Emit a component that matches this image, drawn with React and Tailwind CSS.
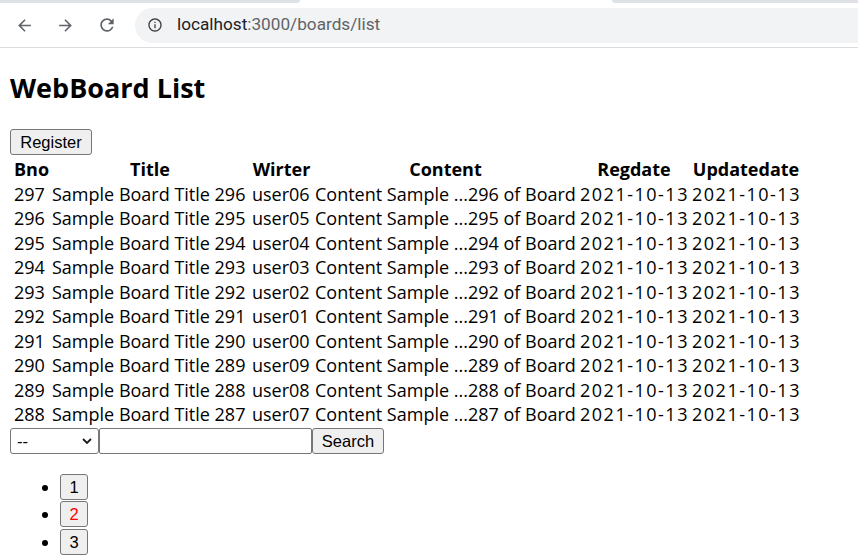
import React from "react";

const rows = [297, 296, 295, 294, 293, 292, 291, 290, 289, 288].map((b) => ({
  bno: b,
  title: `Sample Board Title ${b - 1}`,
  writer: `user0${(b - 1) % 10}`,
  content: `Content Sample ...${b - 1} of Board`,
  regdate: "2021-10-13",
  updatedate: "2021-10-13",
}));

const cols = "grid grid-cols-[38px_200px_63px_265px_112px_112px]";

function BrowserBar() {
  return (
    <div className="w-full">
      <div className="flex h-[3px] w-full">
        <div className="w-[300px] bg-[#dee1e6] rounded-br-[4px]" />
        <div className="w-[312px] bg-white" />
        <div className="flex-1 bg-[#dee1e6] rounded-bl-[4px]" />
      </div>
      <div className="flex h-[44px] items-center bg-white pl-[15px]">
        <svg width="19" height="19" viewBox="0 0 24 24" fill="#5f6368">
          <path d="M20 11H7.83l5.59-5.59L12 4l-8 8 8 8 1.41-1.41L7.83 13H20v-2z" />
        </svg>
        <svg className="ml-[21.5px]" width="19" height="19" viewBox="0 0 24 24" fill="#5f6368">
          <path d="M12 4l-1.41 1.41L16.17 11H4v2h12.17l-5.58 5.59L12 20l8-8z" />
        </svg>
        <svg className="ml-[22.5px]" width="20" height="20" viewBox="0 0 24 24" fill="#5f6368">
          <path d="M17.65 6.35A7.958 7.958 0 0 0 12 4c-4.42 0-7.990 3.58-7.99 8s3.57 8 7.99 8c3.73 0 6.84-2.55 7.73-6h-2.08A5.99 5.99 0 0 1 12 18c-3.31 0-6-2.690-6-6s2.69-6 6-6c1.66 0 3.14.69 4.22 1.78L13 11h7V4l-2.35 2.35z" />
        </svg>
        <div className="ml-[17.5px] flex h-[35px] flex-1 items-center rounded-l-full bg-[#f1f3f4] pl-[12px]">
          <svg width="16" height="16" viewBox="0 0 24 24" fill="#3c4043">
            <path d="M11 7h2v2h-2zm0 4h2v6h-2zm1-9C6.48 2 2 6.48 2 12s4.48 10 10 10 10-4.48 10-10S17.52 2 12 2zm0 18c-4.41 0-8-3.590-8-8s3.59-8 8-8 8 3.59 8 8-3.59 8-8 8z" />
          </svg>
          <span className="ml-[14.5px] font-['Roboto',sans-serif] text-[17.2px] text-[#202124]">
            localhost<span className="text-[#5f6368]">:3000/boards/list</span>
          </span>
        </div>
      </div>
      <div className="h-[1px] w-full bg-[#dadce0]" />
    </div>
  );
}

const btn =
  "flex h-[26px] items-center justify-center rounded-[3px] border border-[#767676] bg-[#efefef] font-['Liberation_Sans',Arial,sans-serif] text-[16.5px]";

export default function App() {
  return (
    <div className="min-h-[558px] w-[858px] bg-white text-black">
      <BrowserBar />
      <div className="px-[10px] font-['Open_Sans','Noto_Sans',sans-serif]">
        <h2 className="mt-[21.8px] text-[27px] font-bold leading-[36px]">WebBoard List</h2>
        <button className={`${btn} mt-[23.5px] w-[82px] text-black`}>Register</button>
        <div className="ml-[2px] mt-[1.2px] text-[18px]">
          <div className={`${cols} h-[24.5px] items-start pt-[3px] font-bold leading-[20.5px]`}>
            <div className="px-[2px] text-center">Bno</div>
            <div className="px-[2px] text-center">Title</div>
            <div className="px-[2px] text-center">Wirter</div>
            <div className="px-[2px] text-center">Content</div>
            <div className="px-[2px] text-center">Regdate</div>
            <div className="px-[2px] text-center">Updatedate</div>
          </div>
          {rows.map((r) => (
            <div key={r.bno} className={`${cols} h-[24.5px] items-start whitespace-nowrap pt-[3px] leading-[20.5px]`}>
              <div className="px-[2px]">{r.bno}</div>
              <div className="px-[2px]">{r.title}</div>
              <div className="px-[2px]">{r.writer}</div>
              <div className="px-[2px]">{r.content}</div>
              <div className="px-[2px] tracking-[1.5px]">{r.regdate}</div>
              <div className="px-[2px] tracking-[1.5px]">{r.updatedate}</div>
            </div>
          ))}
        </div>
        <div className="mt-[2px] flex h-[26px] items-stretch">
          <div className="relative w-[89px]">
            <select className="h-full w-full appearance-none rounded-[3px] border border-[#767676] bg-white pl-[6px] font-['Liberation_Sans',Arial,sans-serif] text-[16.5px] text-black">
              <option>--</option>
            </select>
            <svg className="pointer-events-none absolute left-[72px] top-[10px]" width="10" height="6" viewBox="0 0 10 6">
              <path d="M1 1l4 4 4-4" fill="none" stroke="#1a1a1a" strokeWidth="1.8" />
            </svg>
          </div>
          <input className="w-[213px] rounded-[2px] border border-[#767676] bg-white" />
          <button className={`${btn} w-[72px] text-black`}>Search</button>
        </div>
        <ul className="mt-[20px] list-disc pl-[50px]">
          {[1, 2, 3].map((n) => (
            <li key={n} className="h-[27.5px]">
              <button className={`${btn} w-[28px] ${n === 2 ? "text-[#ff0000]" : "text-black"}`}>{n}</button>
            </li>
          ))}
        </ul>
      </div>
    </div>
  );
}
